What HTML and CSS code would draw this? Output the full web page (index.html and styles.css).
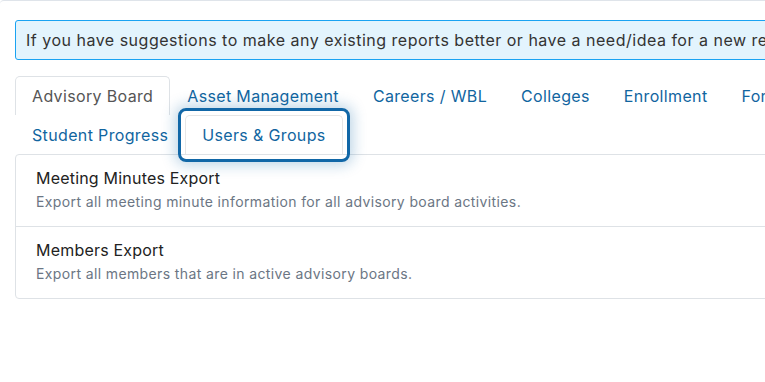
FILE: index.html
```html
<!DOCTYPE html>
<html lang="en">

<head>
    <meta charset="UTF-8">
    <meta name="viewport" content="width=device-width, initial-scale=1.0">
    <title>Reports</title>
    <link rel="stylesheet" href="styles.css">
</head>

<body>
    <div class="frame">
        <div class="alert">If you have suggestions to make any existing reports better or have a need/idea for a new report, please let us know.</div>

        <!-- Report categories -->
        <ul class="tabs">
            <li><a class="tab active">Advisory Board</a></li>
            <li><a class="tab">Asset Management</a></li>
            <li><a class="tab">Careers / WBL</a></li>
            <li><a class="tab">Colleges</a></li>
            <li><a class="tab">Enrollment</a></li>
            <li><a class="tab">Forms</a></li>
            <li><a class="tab">Grants</a></li>
            <li><a class="tab">Programs</a></li>
            <li class="tab-break"></li>
            <li><a class="tab">Student Progress</a></li>
            <li><a class="tab focused">Users &amp; Groups</a></li>
        </ul>

        <div class="panel">
            <div class="report">
                <div class="report-title">Meeting Minutes Export</div>
                <div class="report-desc">Export all meeting minute information for all advisory board activities.</div>
            </div>
            <div class="report">
                <div class="report-title">Members Export</div>
                <div class="report-desc">Export all members that are in active advisory boards.</div>
            </div>
        </div>
    </div>
</body>

</html>
```

FILE: styles.css
```css
body {
    margin: 0;
    overflow: hidden;
    background-color: #ffffff;
    font-family: 'Inter', sans-serif;
    font-size: 16px;
    letter-spacing: 0.5px;
    color: #333333;
}

.frame {
    width: 1100px;
    padding: 0 15px;
    border-top: 1px solid #dfe4ea;
    border-top-left-radius: 4px;
}

.alert {
    margin-top: 19px;
    padding: 7px 10px;
    line-height: 24px;
    background-color: #e3f4fd;
    border: 1px solid #1aa3f2;
    border-radius: 3px;
    color: #333333;
    white-space: nowrap;
}

.tabs {
    list-style: none;
    margin: 16px 0 0;
    padding: 0;
    display: flex;
    flex-wrap: wrap;
    letter-spacing: 0.35px;
}

.tab-break {
    flex-basis: 100%;
}

.tab {
    position: relative;
    display: block;
    padding: 7px 16px;
    line-height: 24px;
    border: 1px solid transparent;
    border-bottom: none;
    border-radius: 5px 5px 0 0;
    color: #11659f;
    cursor: pointer;
}

.tab.active {
    color: #555555;
    border-color: #dee2e6;
    background-color: #ffffff;
}

.tab.focused {
    border-color: #e6e6e6;
}

.tab.focused::after {
    content: "";
    position: absolute;
    top: -8px;
    left: -8px;
    right: -8px;
    bottom: -8px;
    border: 3px solid #1167a7;
    border-radius: 8px;
    box-shadow: 0 0 14px 3px rgba(17, 103, 167, 0.28);
    z-index: 2;
}

.panel {
    border: 1px solid #dee2e6;
    border-radius: 4px;
}

.report {
    padding: 11px 20px 12px;
    border-bottom: 1px solid #dee2e6;
}

.report:last-child {
    border-bottom: none;
}

.report-title {
    line-height: 24px;
    letter-spacing: 0.2px;
    color: #222222;
}

.report-desc {
    font-size: 14px;
    line-height: 24px;
    letter-spacing: 0.38px;
    color: #6b7684;
}
```
